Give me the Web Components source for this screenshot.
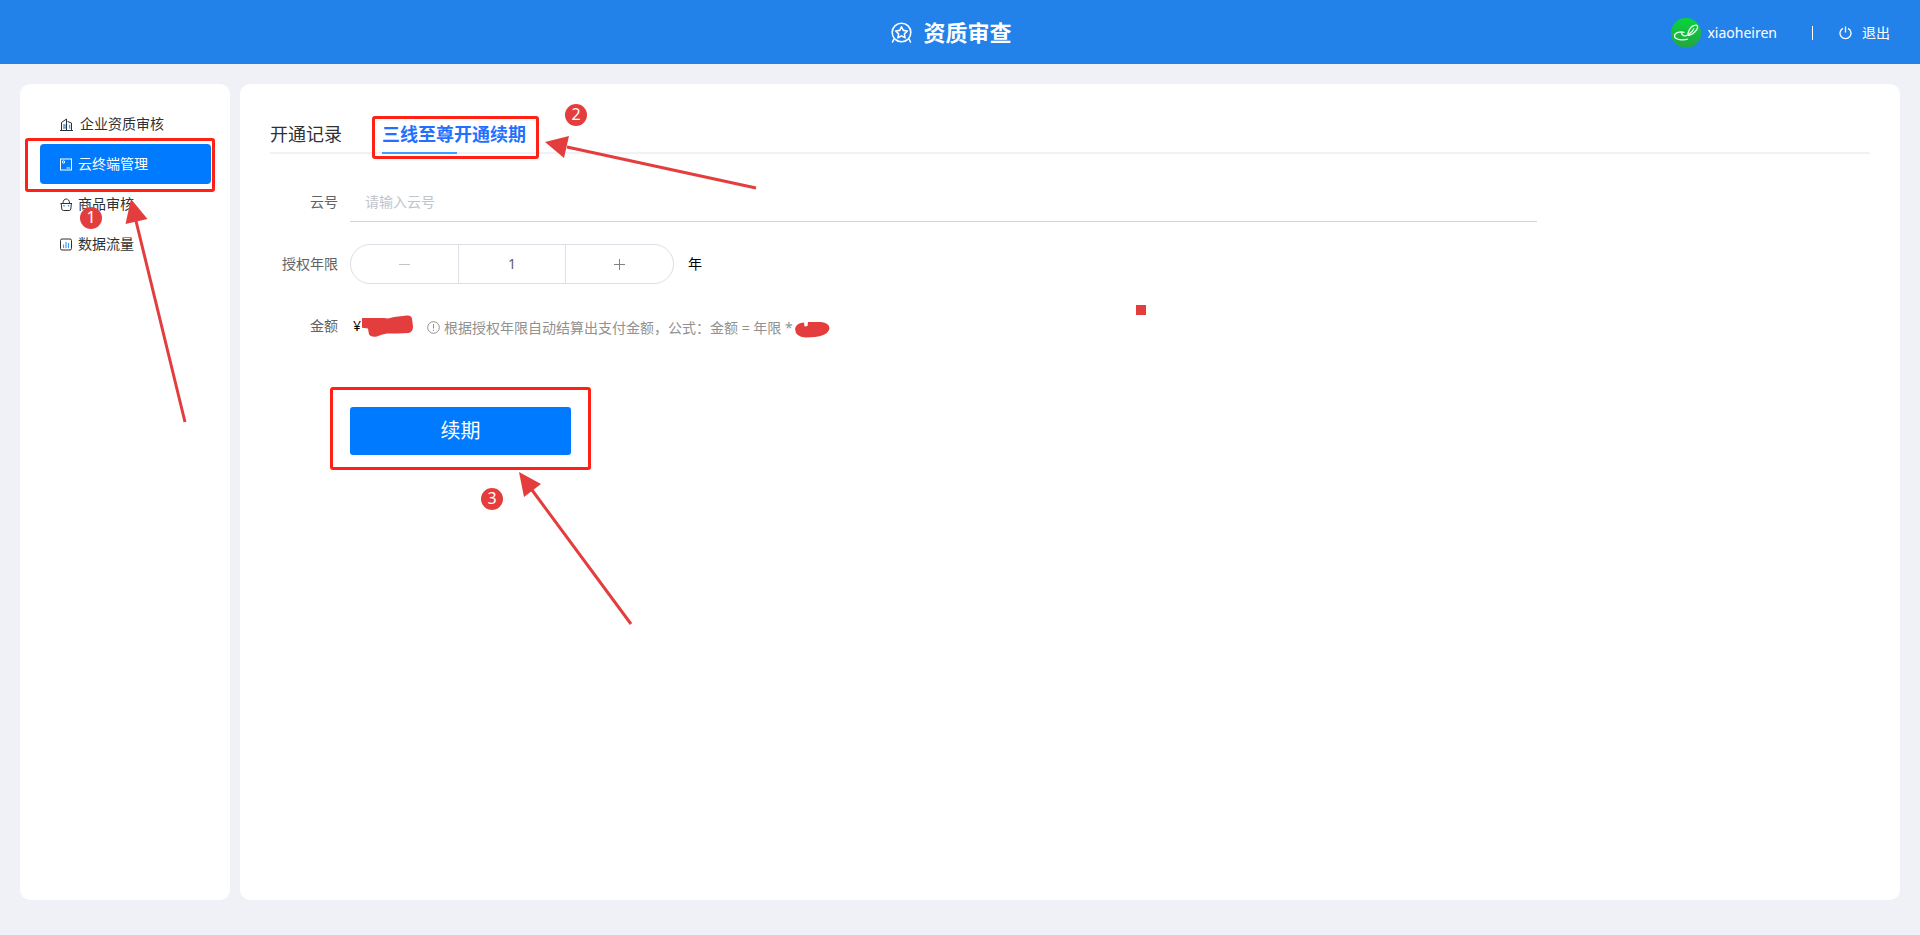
<!DOCTYPE html>
<html lang="zh-CN">
<head>
<meta charset="UTF-8">
<meta name="viewport" content="width=device-width, initial-scale=1">
<title>资质审查</title>
<style>
  body {
    margin: 0;
    background: #eff1f6;
    color: #303133;
    font: 14px/20px "Noto Sans", "Noto Sans CJK SC", sans-serif;
  }
</style>
</head>
<body>
<review-app></review-app>

<script>
  // Attach an open shadow root and fill it
  function render(host, html) {
    host.attachShadow({ mode: "open" }).innerHTML = html;
  }

  // Label column + content column, shared by all the form rows
  const rowStyle = `
    :host { display: block; }
    .row { display: grid; grid-template-columns: 68px 1fr; column-gap: 12px; align-items: center; min-height: 40px; }
    .label { text-align: right; color: #606266; white-space: nowrap; }
  `;

  const icons = {
    company: `<path d="M3 6h3.500v5H3zM9 6.500h1.500V11H9z" fill="#8cc4ff"/><path d="M0 12.500h13M1.500 12V4.500L6.500 1v11M7.500 3.500l4 1.500v7" stroke="currentColor"/><path d="M3.500 7.500h2M3.500 9.500h2M9.500 7v3" stroke="#409eff"/>`,
    cloud: `<rect x=".5" y="1" width="11" height="11" stroke="currentColor"/><circle cx="3.500" cy="4" r="1.200" stroke="currentColor"/><path d="M6.500 10h3.500" stroke="currentColor"/>`,
    goods: `<path d="M.5 5.500h11.500M1.200 5.500l.6 5.500q.2 1.500 1.500 1.500h6q1.300 0 1.500-1.500l.6-5.500M3 5C3-.3 9.500-.3 9.500 5" stroke="currentColor"/><path d="M4 7v1.500M8.500 7v1.500" stroke="#409eff" stroke-width="1.500"/>`,
    data: `<rect x=".5" y="1" width="11" height="11" rx="1.500" stroke="currentColor"/><path d="M3.500 6.500V10M6 4v6M8.500 5v5" stroke="#409eff" stroke-width="1.200"/>`
  };

  class AppHeader extends HTMLElement {
    connectedCallback() {
      render(this, `
        <style>
          :host { display: block; background: #2382ea; color: #fff; }
          header { display: grid; grid-template-columns: 1fr auto 1fr; align-items: center; height: 64px; padding: 0 30px; }
          .brand { grid-column: 2; display: flex; align-items: center; gap: 11px; padding-right: 17px; }
          h1 { margin: 0; font-size: 22px; line-height: 32px; }
          .user { display: flex; justify-content: flex-end; align-items: center; padding-top: 2px; }
          .avatar { margin-right: 6px; }
          .line { width: 1px; height: 14px; margin: 0 26px 0 35px; background: #fff; }
          .logout { display: flex; align-items: center; gap: 10px; color: inherit; text-decoration: none; }
          svg { display: block; fill: none; }
        </style>
        <header>
          <div class="brand">
            <svg width="21" height="21" viewBox="0 0 21 21" stroke="#fff" stroke-width="1.600" stroke-linejoin="round" stroke-linecap="round">
              <circle cx="10.500" cy="10.500" r="9.300"/>
              <path d="M1.500 20l1.500-3M19.500 20L18 17"/>
              <path d="M10.500 4.800l1.800 3.600 4 .6-2.900 2.800.7 4-3.600-1.900-3.600 1.900.7-4L4.700 9l4-.6z"/>
            </svg>
            <h1>资质审查</h1>
          </div>
          <div class="user">
            <svg class="avatar" width="30" height="30" viewBox="0 0 30 30">
              <defs><linearGradient id="g" x2="0" y2="1"><stop stop-color="#05d63a"/><stop offset="1" stop-color="#26a343"/></linearGradient></defs>
              <circle cx="15" cy="15" r="15" fill="url(#g)"/>
              <path d="M13.500 14.500c-4-1.500-10 0-10 3.500 0 4 9 4.500 13.500 3M10.500 14.500c0 3 3.500 4.500 6 2.500M17 17.500c-.5-3 2-9 6-10 4-1.200 4.500 1.500 2.500 4.500-2 2.500-5 5-8.500 5.500M18 16c2-1 4-3.500 5-5.500" stroke="#e9ffed" stroke-width="1.300"/>
            </svg>
            <span>xiaoheiren</span>
            <span class="line"></span>
            <a class="logout" href="#">
              <svg width="13" height="14" viewBox="0 0 13 14" stroke="#fff" stroke-width="1.300"><path d="M4 2.300a5.500 5.500 0 1 0 5 0M6.500 .5v6"/></svg>
              <span>退出</span>
            </a>
          </div>
        </header>
      `);
    }
  }

  class MenuItem extends HTMLElement {
    connectedCallback() {
      render(this, `
        <style>
          :host { display: block; color: #303133; }
          :host([active]) { color: #fff; background: #007bff; border-radius: 4px; }
          a { display: flex; align-items: center; gap: 5px; height: 40px; padding-left: 20px; color: inherit; text-decoration: none; }
          :host([icon="company"]) a { gap: 7px; }
          svg { display: block; fill: none; }
        </style>
        <a href="#"><svg width="13" height="13" viewBox="0 0 13 13">${icons[this.getAttribute("icon")]}</svg><slot></slot></a>
      `);
    }
  }

  class SideMenu extends HTMLElement {
    connectedCallback() {
      render(this, `
        <style>
          :host { display: block; background: #fff; border-radius: 10px; }
          nav { padding: 20px 19px 20px 20px; }
        </style>
        <nav><slot></slot></nav>
      `);
    }
  }

  class TabBar extends HTMLElement {
    connectedCallback() {
      render(this, `
        <style>
          :host { display: block; }
          .tabs { display: flex; gap: 40px; height: 40px; box-shadow: inset 0 -2px #f0f2f5; }
          button { position: relative; padding: 0; border: 0; background: none; color: #303133; font: inherit; font-size: 18px; line-height: 40px; cursor: pointer; }
          .active { color: #246fff; font-weight: bold; }
          .active::after { content: ""; position: absolute; left: 0; bottom: 0; width: 75px; height: 2px; background: #409eff; }
        </style>
        <div class="tabs" role="tablist">
          <button role="tab">开通记录</button>
          <button role="tab" class="active" aria-selected="true">三线至尊开通续期</button>
        </div>
      `);
      const tabs = this.shadowRoot.querySelectorAll("button");
      tabs.forEach((tab) => {
        tab.addEventListener("click", () => {
          tabs.forEach((t) => t.classList.toggle("active", t === tab));
        });
      });
    }
  }

  class CloudField extends HTMLElement {
    connectedCallback() {
      render(this, `
        <style>
          ${rowStyle}
          input { box-sizing: border-box; width: 100%; height: 41px; padding: 0 15px; border: 0; border-bottom: 1px solid #d3d4d8; outline: none; background: none; color: #606266; font: inherit; }
          input::placeholder { color: #c0c4cc; }
        </style>
        <div class="row">
          <label class="label" for="cloud">云号</label>
          <input id="cloud" type="text" placeholder="请输入云号">
        </div>
      `);
    }
  }

  class YearStepper extends HTMLElement {
    connectedCallback() {
      render(this, `
        <style>
          ${rowStyle}
          .content { display: flex; align-items: center; gap: 14px; color: #000; }
          .stepper { box-sizing: border-box; display: grid; grid-template-columns: repeat(3, 1fr); width: 324px; height: 40px; border: 1px solid #dcdfe6; border-radius: 20px; overflow: hidden; }
          button { display: grid; place-items: center; padding: 0; border: 0; background: none; color: #808285; cursor: pointer; }
          button:disabled { color: #c0c4cc; }
          input { min-width: 0; padding: 0; border: 0; border-left: 1px solid #dcdfe6; border-right: 1px solid #dcdfe6; outline: none; text-align: center; color: #606266; font: inherit; }
          svg { display: block; fill: none; }
        </style>
        <div class="row">
          <label class="label" for="years">授权年限</label>
          <div class="content">
            <div class="stepper">
              <button type="button" class="minus" aria-label="减少" disabled><svg width="11" height="11" stroke="currentColor"><path d="M0 5.500h11"/></svg></button>
              <input id="years" type="text" value="1">
              <button type="button" class="plus" aria-label="增加"><svg width="11" height="11" stroke="currentColor"><path d="M0 5.500h11M5.500 0v11"/></svg></button>
            </div>
            <span>年</span>
          </div>
        </div>
      `);
      const input = this.shadowRoot.querySelector("input");
      const minus = this.shadowRoot.querySelector(".minus");
      const step = (n) => {
        input.value = Math.max(1, Number(input.value) + n);
        minus.disabled = input.value === "1";
      };
      minus.addEventListener("click", () => step(-1));
      this.shadowRoot.querySelector(".plus").addEventListener("click", () => step(1));
    }
  }

  class AmountRow extends HTMLElement {
    connectedCallback() {
      render(this, `
        <style>
          ${rowStyle}
          .content { display: flex; align-items: center; white-space: nowrap; }
          .price { width: 77px; padding-left: 3px; box-sizing: border-box; color: #000; }
          .hint { display: flex; align-items: center; gap: 4px; padding-top: 3px; color: #919191; }
          svg { display: block; fill: none; }
        </style>
        <div class="row">
          <span class="label">金额</span>
          <div class="content">
            <span class="price">¥</span>
            <span class="hint">
              <svg width="13" height="13" stroke="currentColor"><circle cx="6.500" cy="6.500" r="5.800"/><path d="M6.500 3v4.500M6.500 8.800v1.200"/></svg>
              <span>根据授权年限自动结算出支付金额，公式：金额 = 年限 *</span>
            </span>
          </div>
        </div>
      `);
    }
  }

  class SubmitButton extends HTMLElement {
    connectedCallback() {
      render(this, `
        <style>
          :host { display: block; }
          button { width: 221px; height: 48px; padding: 0; border: 0; border-radius: 3px; background: #007bff; color: #fff; font: inherit; font-size: 20px; cursor: pointer; }
        </style>
        <button type="button"><slot></slot></button>
      `);
    }
  }

  class StepBadge extends HTMLElement {
    connectedCallback() {
      render(this, `
        <style>
          :host { display: block; width: 22px; height: 22px; border-radius: 50%; background: #e43d3d; color: #fff; font-size: 16px; line-height: 20px; text-align: center; }
        </style>
        <slot></slot>
      `);
    }
  }

  // Hand-drawn guide marks floating over the page
  class GuideLayer extends HTMLElement {
    connectedCallback() {
      render(this, `
        <style>
          :host { position: absolute; top: 0; left: 0; width: 0; height: 0; pointer-events: none; }
          .box { position: absolute; box-sizing: border-box; border: 3px solid #ff2116; border-radius: 3px; }
          .menu { left: 25px; top: 138px; width: 190px; height: 54px; }
          .tab { left: 372px; top: 116px; width: 167px; height: 43px; }
          .submit { left: 330px; top: 387px; width: 261px; height: 83px; }
          step-badge { position: absolute; }
          .one { left: 80px; top: 207px; }
          .two { left: 565px; top: 104px; }
          .three { left: 481px; top: 488px; }
          svg { position: absolute; top: 0; left: 0; overflow: visible; }
        </style>
        <div class="box menu"></div>
        <div class="box tab"></div>
        <div class="box submit"></div>
        <svg width="1" height="1" fill="#e43d3d">
          <path d="M185 422L136 221M756 188L567 147M631 624L532 490" stroke="#e43d3d" stroke-width="3"/>
          <path d="M131 199l16.500 20-22 5zM545 142l24-6-5 22zM519 472l22 12-17 13z"/>
          <path d="M362 318h22l4 .5 6-1.500 13-1.500q4-.5 5 3l1 8q0 5-4 6.500-12 .5-22 .5-6 1-10 3-6 1-8-2l-1-6-6-.8z"/>
          <path d="M795 329q1-5 6-6l3-.5.5 4 3-.5.5-4h13q8 1 8.500 6 0 5-9 8-4 1-15 1.500-10-.5-10.500-8.500z"/>
          <path d="M1136 305h10v10h-10z"/>
        </svg>
        <step-badge class="one">1</step-badge>
        <step-badge class="two">2</step-badge>
        <step-badge class="three">3</step-badge>
      `);
    }
  }

  class ReviewApp extends HTMLElement {
    connectedCallback() {
      render(this, `
        <style>
          :host { display: block; }
          .page { display: grid; grid-template-columns: 210px 1fr; gap: 10px; padding: 20px 20px 35px; min-height: calc(100vh - 119px); }
          main { padding: 30px; background: #fff; border-radius: 10px; }
          form { display: flex; flex-direction: column; gap: 22px; width: calc(100% * 19 / 24); padding-top: 27px; }
          submit-button { padding: 39px 0 0 80px; }
        </style>
        <app-header></app-header>
        <div class="page">
          <side-menu>
            <menu-item icon="company">企业资质审核</menu-item>
            <menu-item icon="cloud" active>云终端管理</menu-item>
            <menu-item icon="goods">商品审核</menu-item>
            <menu-item icon="data">数据流量</menu-item>
          </side-menu>
          <main>
            <tab-bar></tab-bar>
            <form>
              <cloud-field></cloud-field>
              <year-stepper></year-stepper>
              <amount-row></amount-row>
              <submit-button>续期</submit-button>
            </form>
          </main>
        </div>
        <guide-layer></guide-layer>
      `);
    }
  }

  customElements.define("app-header", AppHeader);
  customElements.define("menu-item", MenuItem);
  customElements.define("side-menu", SideMenu);
  customElements.define("tab-bar", TabBar);
  customElements.define("cloud-field", CloudField);
  customElements.define("year-stepper", YearStepper);
  customElements.define("amount-row", AmountRow);
  customElements.define("submit-button", SubmitButton);
  customElements.define("step-badge", StepBadge);
  customElements.define("guide-layer", GuideLayer);
  customElements.define("review-app", ReviewApp);
</script>
</body>
</html>
